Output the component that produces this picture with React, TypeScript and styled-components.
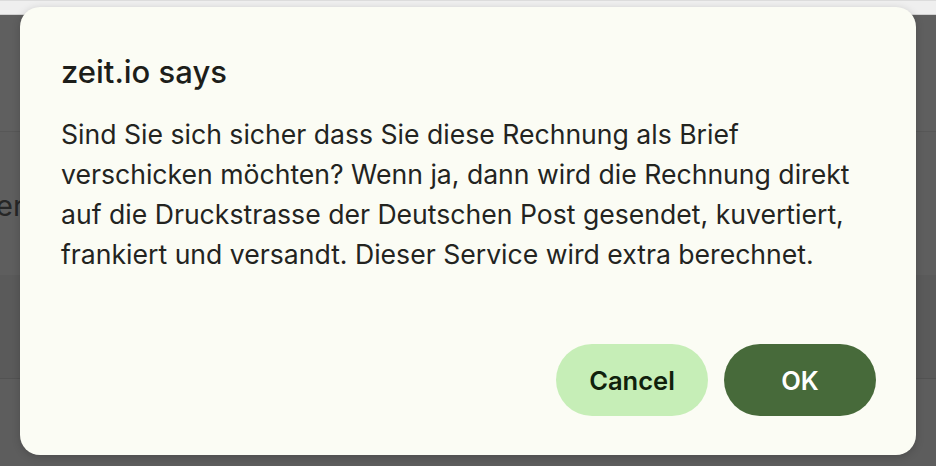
import React from "react";
import styled, { createGlobalStyle } from "styled-components";

const Global = createGlobalStyle`
  html, body { margin: 0; padding: 0; }
  body { width: 936px; height: 466px; overflow: hidden; font-family: Inter, "Noto Sans", sans-serif; }
  #root { height: 466px; }
`;

const Page = styled.div`
  position: relative;
  width: 936px;
  height: 466px;
  display: flex;
  flex-direction: column;
  background: #5d5d5d;
  overflow: hidden;
`;

const TopBar = styled.div`
  height: 13px;
  background: #efefef;
  border-top: 1px solid #dcdcdc;
  border-bottom: 1px solid #d2d2d2;
`;

const Band = styled.div<{ $h: number; $bg: string; $line?: string }>`
  height: ${(p) => p.$h}px;
  background: ${(p) => p.$bg};
  border-bottom: ${(p) => (p.$line ? `1px solid ${p.$line}` : "none")};
  display: flex;
  align-items: center;
`;

const PageHeading = styled.span`
  font-size: 29px;
  color: #262626;
  margin-left: -4px;
  margin-top: 4px;
`;

const Dialog = styled.div`
  position: absolute;
  left: 20px;
  top: 7px;
  width: 896px;
  height: 448px;
  box-sizing: border-box;
  padding: 46px 40px 39px 41px;
  background: #fbfcf4;
  border-radius: 20px;
  box-shadow: 0 2px 8px rgba(0, 0, 0, 0.18);
  display: flex;
  flex-direction: column;
`;

const Title = styled.h1`
  margin: 0;
  font-size: 31px;
  font-weight: 500;
  color: #1d1e1a;
  line-height: 38px;
`;

const Message = styled.p`
  margin: 23px 0 0;
  font-size: 26.6px;
  line-height: 40px;
  color: #23241f;
  flex: 1;
`;

const Actions = styled.div`
  display: flex;
  justify-content: flex-end;
  gap: 16px;
`;

const Button = styled.button<{ $primary?: boolean }>`
  width: 152px;
  height: 72px;
  border: none;
  border-radius: 36px;
  font-family: Inter, "Noto Sans", sans-serif;
  font-size: 25.5px;
  font-weight: 600;
  background: ${(p) => (p.$primary ? "#476a3a" : "#c6eeb7")};
  color: ${(p) => (p.$primary ? "#ffffff" : "#10200c")};
  cursor: pointer;
`;

export default function App() {
  return (
    <>
      <Global />
      <Page>
        <TopBar />
        <Band $h={116} $bg="#5f5f5f" $line="#575757" />
        <Band $h={143} $bg="#5e5e5e">
          <PageHeading>er</PageHeading>
        </Band>
        <Band $h={103} $bg="#5a5a5a" $line="#525252" />
        <Dialog role="dialog">
          <Title>zeit.io says</Title>
          <Message>
            Sind Sie sich sicher dass Sie diese Rechnung als Brief
            <br />
            verschicken möchten? Wenn ja, dann wird die Rechnung direkt
            <br />
            auf die Druckstrasse der Deutschen Post gesendet, kuvertiert,
            <br />
            frankiert und versandt. Dieser Service wird extra berechnet.
          </Message>
          <Actions>
            <Button>Cancel</Button>
            <Button $primary>OK</Button>
          </Actions>
        </Dialog>
      </Page>
    </>
  );
}
